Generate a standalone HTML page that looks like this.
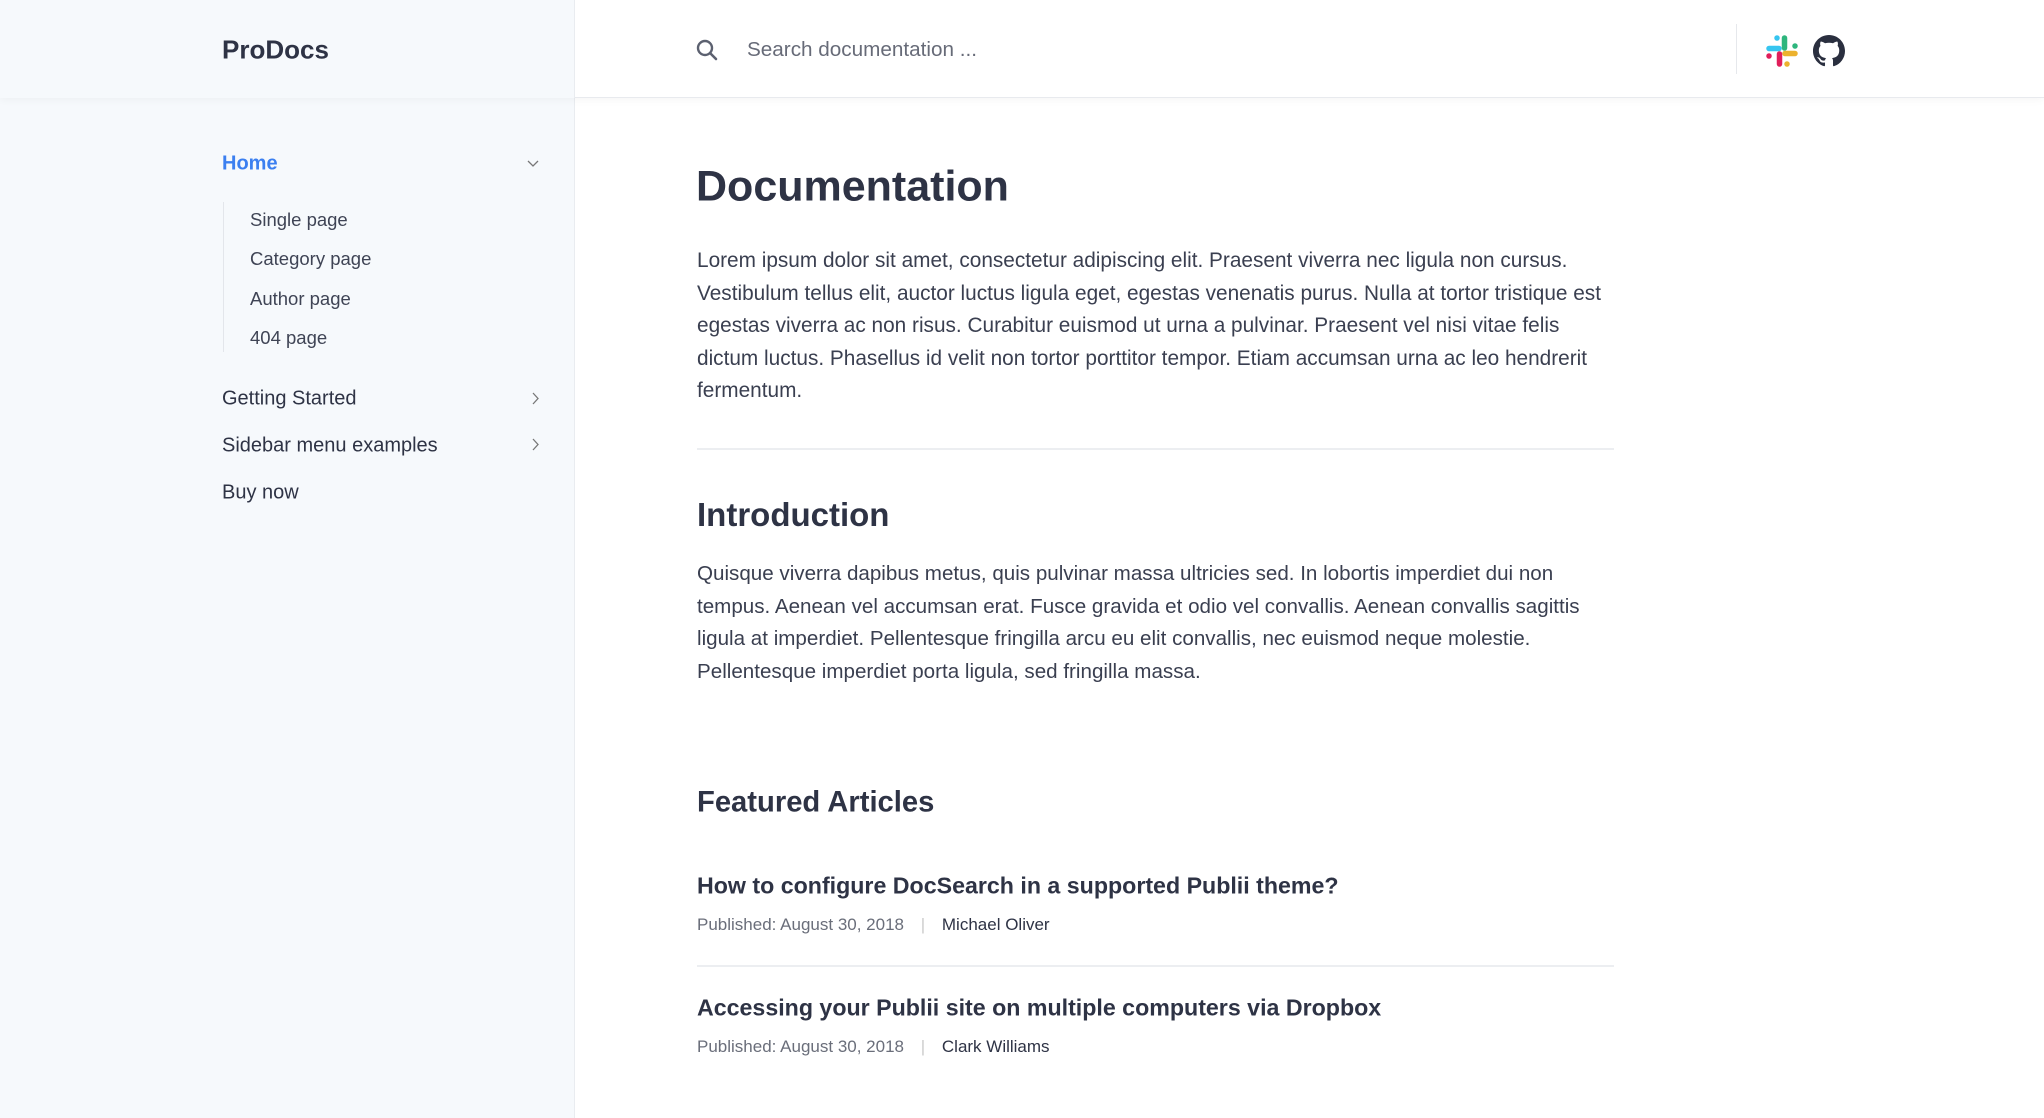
<!DOCTYPE html>
<html><head><meta charset="utf-8"><style>
*{margin:0;padding:0;box-sizing:border-box}
body{width:2044px;height:1118px;overflow:hidden;background:#fff;font-family:"Liberation Sans",Arial,sans-serif;color:#2e3345;position:relative}
.sb{position:absolute;left:0;top:0;width:575px;height:1118px;background:#f6f9fc;border-right:1px solid #e9ecf0}
.hd{position:absolute;left:0;top:0;width:2044px;height:98px;border-bottom:1px solid #e8eaee;box-shadow:0 2px 8px rgba(0,0,0,0.04)}
.hdl{position:absolute;left:0;top:0;width:575px;height:98px;background:#f6f9fc;border-right:1px solid #e9ecf0}
.a{position:absolute;white-space:nowrap}
.t{transform:translateY(-50%)}
p.a{white-space:normal}
</style></head><body>
<div class="sb"></div>
<div class="hd"></div><div class="hdl"></div>
<div class="a t" style="left:222px;top:50px;font-size:26px;font-weight:bold;color:#2e3345">ProDocs</div>
<svg class="a" style="left:696px;top:39px" width="22" height="22" viewBox="0 0 22 22"><circle cx="9" cy="9" r="7" fill="none" stroke="#5c6170" stroke-width="2.4"/><path d="M14 14l6 6" stroke="#5c6170" stroke-width="2.6" stroke-linecap="round"/></svg>
<div class="a t" style="left:747px;top:50px;font-size:20.7px;color:#676b78">Search documentation ...</div>
<div class="a" style="left:1736px;top:24px;width:1px;height:50px;background:#e6e8ec"></div>
<svg class="a" style="left:1766px;top:35px" width="32" height="32" viewBox="0 0 32 32" stroke-linecap="round" stroke-width="5.5" fill="none">
<path d="M3 13.5h10" stroke="#36c5f0"/><path d="M11 3v0" stroke="#36c5f0"/>
<path d="M18.5 3v10" stroke="#2eb67d"/><path d="M29 11h0" stroke="#2eb67d"/>
<path d="M19 18.5h10" stroke="#ecb22e"/><path d="M21 29v0" stroke="#ecb22e"/>
<path d="M13.5 19v10" stroke="#e01e5a"/><path d="M3 21h0" stroke="#e01e5a"/></svg>
<svg class="a" style="left:1813px;top:35px" width="32" height="32" viewBox="0 0 16 16"><path fill="#2a2f3f" d="M8 0C3.58 0 0 3.58 0 8c0 3.54 2.290 6.53 5.470 7.59.4.07.55-.17.55-.38 0-.19-.01-.82-.01-1.49-2.010.37-2.530-.49-2.690-.94-.09-.23-.48-.94-.82-1.130-.28-.15-.68-.52-.01-.53.63-.01 1.080.58 1.230.82.72 1.210 1.870.87 2.330.66.07-.52.28-.87.51-1.070-1.780-.2-3.640-.89-3.640-3.950 0-.87.31-1.590.82-2.150-.08-.2-.36-1.020.08-2.120 0 0 .67-.21 2.200.82.64-.18 1.320-.27 2-.27.68 0 1.360.09 2 .27 1.530-1.040 2.200-.82 2.200-.82.44 1.100.16 1.920.08 2.120.51.56.82 1.270.82 2.150 0 3.070-1.870 3.750-3.650 3.950.29.25.54.73.54 1.480 0 1.070-.01 1.930-.01 2.200 0 .21.15.46.55.38A8.013 8.013 0 0016 8c0-4.420-3.580-8-8-8z"/></svg>

<div class="a t" style="left:222px;top:164px;font-size:20px;font-weight:bold;color:#3b7ff0">Home</div>
<svg class="a" style="left:527px;top:160px" width="12" height="8" viewBox="0 0 12 8"><path d="M1 1l5 5 5-5" fill="none" stroke="#777" stroke-width="1.3"/></svg>
<div class="a" style="left:223px;top:202px;width:1px;height:150px;background:#e3e6eb"></div>
<div class="a t" style="left:250px;top:220px;font-size:18.5px;color:#3f4455">Single page</div>
<div class="a t" style="left:250px;top:259px;font-size:18.5px;color:#3f4455">Category page</div>
<div class="a t" style="left:250px;top:299px;font-size:18.5px;color:#3f4455">Author page</div>
<div class="a t" style="left:250px;top:338px;font-size:18.5px;color:#3f4455">404 page</div>
<div class="a t" style="left:222px;top:399px;font-size:20px;color:#2e3345">Getting Started</div>
<svg class="a" style="left:532px;top:392px" width="8" height="13" viewBox="0 0 8 13"><path d="M1 1l5 5.5-5 5.5" fill="none" stroke="#777" stroke-width="1.3"/></svg>
<div class="a t" style="left:222px;top:446px;font-size:20px;color:#2e3345">Sidebar menu examples</div>
<svg class="a" style="left:532px;top:438px" width="8" height="13" viewBox="0 0 8 13"><path d="M1 1l5 5.5-5 5.5" fill="none" stroke="#777" stroke-width="1.3"/></svg>
<div class="a t" style="left:222px;top:493px;font-size:20px;color:#2e3345">Buy now</div>

<div class="a t" style="left:696px;top:187px;font-size:43px;font-weight:bold;color:#2e3345">Documentation</div>
<p class="a" style="left:697px;top:245px;width:920px;font-size:20.8px;line-height:32.5px;color:#3a3f50">Lorem ipsum dolor sit amet, consectetur adipiscing elit. Praesent viverra nec ligula non cursus. Vestibulum tellus elit, auctor luctus ligula eget, egestas venenatis purus. Nulla at tortor tristique est egestas viverra ac non risus. Curabitur euismod ut urna a pulvinar. Praesent vel nisi vitae felis dictum luctus. Phasellus id velit non tortor porttitor tempor. Etiam accumsan urna ac leo hendrerit fermentum.</p>
<div class="a" style="left:697px;top:448px;width:917px;height:2px;background:#eceef1"></div>
<div class="a t" style="left:697px;top:515px;font-size:33px;font-weight:bold;color:#2e3345">Introduction</div>
<p class="a" style="left:697px;top:558px;width:920px;font-size:20.6px;line-height:32.5px;color:#3a3f50">Quisque viverra dapibus metus, quis pulvinar massa ultricies sed. In lobortis imperdiet dui non tempus. Aenean vel accumsan erat. Fusce gravida et odio vel convallis. Aenean convallis sagittis ligula at imperdiet. Pellentesque fringilla arcu eu elit convallis, nec euismod neque molestie. Pellentesque imperdiet porta ligula, sed fringilla massa.</p>
<div class="a t" style="left:697px;top:803px;font-size:29.2px;font-weight:bold;color:#2e3345">Featured Articles</div>
<div class="a t" style="left:697px;top:886px;font-size:23.2px;font-weight:bold;color:#2e3345">How to configure DocSearch in a supported Publii theme?</div>
<div class="a t" style="left:697px;top:925px;font-size:17px;color:#6a6e7a">Published: August 30, 2018 <span style="color:#ccc;margin:0 12px">|</span> <span style="color:#2e3345">Michael Oliver</span></div>
<div class="a" style="left:697px;top:965px;width:917px;height:2px;background:#eceef1"></div>
<div class="a t" style="left:697px;top:1008px;font-size:23.2px;font-weight:bold;color:#2e3345">Accessing your Publii site on multiple computers via Dropbox</div>
<div class="a t" style="left:697px;top:1047px;font-size:17px;color:#6a6e7a">Published: August 30, 2018 <span style="color:#ccc;margin:0 12px">|</span> <span style="color:#2e3345">Clark Williams</span></div>
</body></html>
